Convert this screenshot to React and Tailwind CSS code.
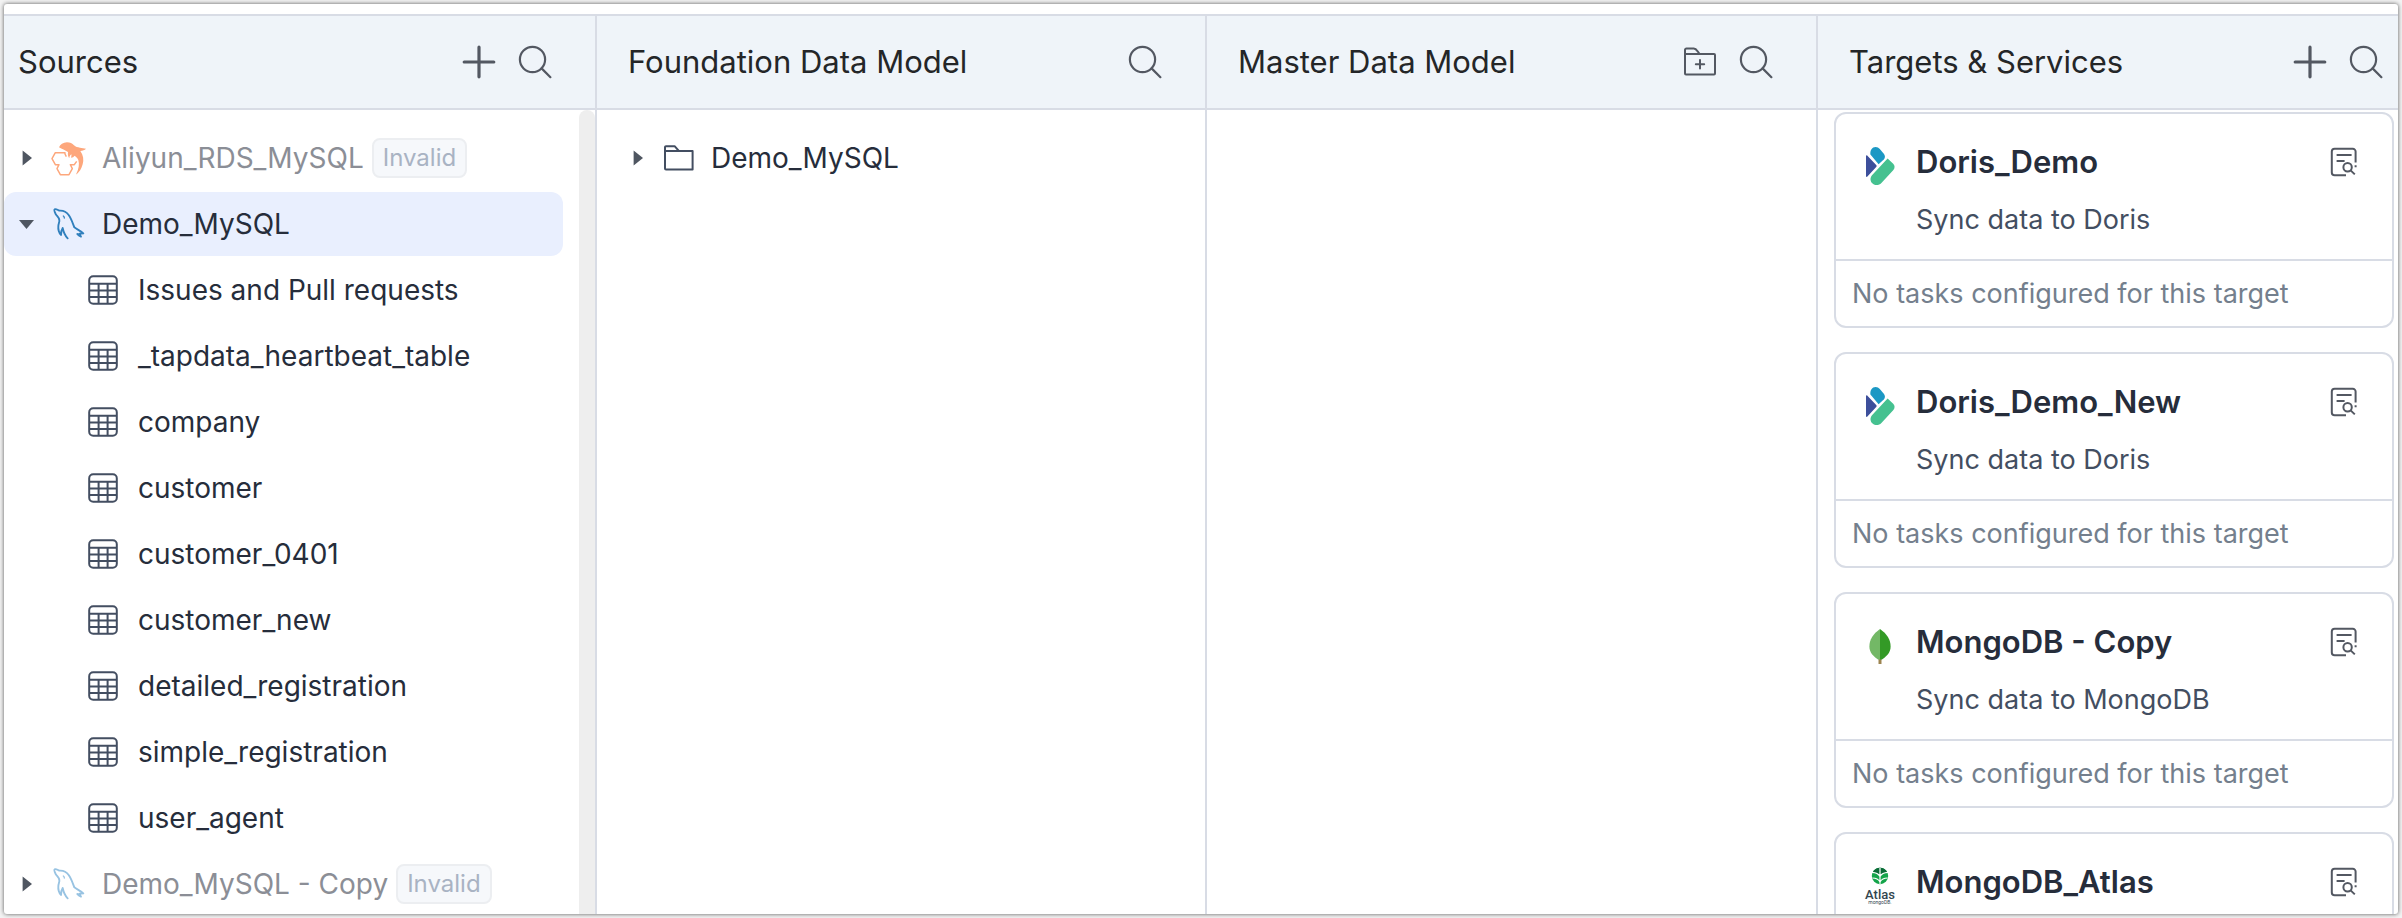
import React from "react";

function SearchIcon() {
  return (
    <svg viewBox="0 0 36 36" className="size-9" fill="none" stroke="currentColor" strokeWidth="2.2" strokeLinecap="round">
      <circle cx="15.5" cy="15.5" r="12.6" />
      <path d="M24.6 24.4 33.4 33.2" />
    </svg>
  );
}

function PlusIcon() {
  return (
    <svg viewBox="0 0 36 36" className="size-9" fill="none" stroke="currentColor" strokeWidth="3.2" strokeLinecap="round">
      <path d="M18 3.2v29.6M3.2 18h29.6" />
    </svg>
  );
}

function FolderPlusIcon() {
  return (
    <svg viewBox="0 0 36 36" className="size-9" fill="none" stroke="currentColor" strokeWidth="2" strokeLinejoin="round" strokeLinecap="round">
      <path d="M3 10V6a1.4 1.4 0 0 1 1.4-1.4h7.4c2.6 0 3.2 2.2 5.6 5.1M3 10h29a1 1 0 0 1 1 1v18.6a1 1 0 0 1-1 1H4a1 1 0 0 1-1-1z" />
      <path d="M18 16v8.4M13.8 20.2h8.4" />
    </svg>
  );
}

function FolderIcon() {
  return (
    <svg viewBox="0 0 32 32" className="size-8" fill="none" stroke="currentColor" strokeWidth="2" strokeLinejoin="round">
      <path d="M2 9V5.2a1 1 0 0 1 1-1h8.6l4 4.4M2 9h27.6v18.6H3a1 1 0 0 1-1-1z" />
    </svg>
  );
}

function TableIcon() {
  return (
    <svg viewBox="0 0 30 30" className="size-[30px]" fill="none" stroke="currentColor" strokeWidth="2">
      <rect x="1.2" y="1.2" width="27.6" height="27.6" rx="4" />
      <path d="M1.2 8.8h27.6M1.2 15.6h27.6M1.2 22h27.6M10.6 8.8v20M19.6 8.8v20" />
    </svg>
  );
}

function DetailIcon() {
  return (
    <svg viewBox="0 0 32 32" className="size-8" fill="none" stroke="currentColor" strokeWidth="2">
      <path d="M19 29.2H7.6a2.8 2.8 0 0 1-2.8-2.8V5.6a2.8 2.8 0 0 1 2.8-2.8h18.2a2.8 2.8 0 0 1 2.8 2.8v11" />
      <path d="M9.6 9h15M9.6 15h8" />
      <circle cx="20.6" cy="21.2" r="4.2" />
      <path d="M23.6 24.4l4.2 4M27.6 20.2h2" />
    </svg>
  );
}

function Caret({ open }) {
  return (
    <svg viewBox="0 0 20 20" className="size-5" fill="#4f5661">
      {open ? <path d="M3 6h15l-7.5 9z" /> : <path d="M6.6 2.6v14.8L16 10z" />}
    </svg>
  );
}

function AliyunIcon() {
  return (
    <svg viewBox="12 12 108 108" className="size-9" fill="none">
      <path
        d="M36 34c4-8 12-15 24-15 9 0 16 4 21 9 5 6 11 5 18 7 6 1 12 1 18 3-4 4-10 6-17 7 9 12 11 27 7 40-4 14-10 23-18 30-1 0-2-1-1-2 7-14 10-28 6-41-2-6-6-9-11-13-3 4-6 5-11 6 1-4 2-7 1-10-4 3-6 7-6 12-4-5-5-11-4-19-9-6-18-8-27-14z"
        fill="#fda77c"
      />
      <path
        d="M58 62l-4-8v-4H25L15 68l10 18h11l-6 12 10 18h26l10-18-6-12h12l7-10"
        stroke="#fda77c"
        strokeWidth="4.4"
        strokeLinejoin="round"
      />
    </svg>
  );
}

function MysqlIcon({ faded }) {
  return (
    <svg
      viewBox="12 12 108 108"
      className="size-9"
      fill="none"
      stroke={faded ? "#98c3e2" : "#3180bd"}
      strokeWidth="5.6"
      strokeLinejoin="round"
      strokeLinecap="round"
    >
      <path d="M62 109c-7-7-12-17-15-31-4 6-5 13-5 21-6-7-9-17-8-27 0-7 4-11 3-18-1-8-7-11-11-18-3-6-6-12-3-14 4-2 9 2 14 4 12-1 21 3 28 13 8 11 12 24 17 37 8 6 18 10 27 18-5 1-8 1-12 1l5 9c-5-2-8-5-11-8" />
      <path d="M49 42c2 1 3 3 3 6" strokeWidth="4" />
    </svg>
  );
}

function DorisIcon() {
  return (
    <svg viewBox="0 0 40 40" className="size-10">
      <path d="M6 10.2c0-.9.8-1.2 1.4-.5l8.800 9.200c.6.7.6 1.300 0 2L7.400 30.600c-.6.6-1.400.4-1.400-.5z" fill="#3d4f9b" />
      <path d="M10.400 8.600C9.800 4.200 12.200 1 15.600 1c1.800 0 3 .7 4.200 2l4 4.800c1.500 1.800 1.500 4 0 5.800l-5.200 4.600z" fill="#1b98c4" />
      <path d="M27.600 12.400l5.600 5.400c1.800 1.800 1.800 4.200.2 6.200L21.400 37c-2.400 2.600-6.200 2.800-8.800.6-2.600-2.200-2.800-6-.4-8.600z" fill="#45c190" />
    </svg>
  );
}

function MongoIcon() {
  return (
    <svg viewBox="0 0 40 40" className="size-10">
      <path d="M20 3C13 8 9.4 13.5 9.4 20.5c0 6 4 10.5 10.6 14z" fill="#73b866" />
      <path d="M20 3c7 5 10.6 10.5 10.6 17.5 0 6-4 10.5-10.6 14z" fill="#339a26" />
      <path d="M18.5 33.5h3V38h-3z" fill="#9c8450" />
    </svg>
  );
}

function AtlasIcon() {
  return (
    <svg viewBox="0 0 40 40" className="size-10">
      <circle cx="20" cy="10" r="8.2" fill="#14a44a" />
      <path d="M20 1.8a8.2 8.2 0 0 1 7 4L20 9.6 13 5.8a8.2 8.2 0 0 1 7-4z" fill="#0b6b37" />
      <path d="M20 2v16M12 6.4c3.400.2 6.400 1.200 8 4M28 6.400c-3.400.2-6.400 1.200-8 4M12.400 12c3 0 6 1 7.600 4M27.600 12c-3 0-6 1-7.600 4" stroke="#fff" strokeWidth="1.2" fill="none" />
      <text x="20" y="33" textAnchor="middle" fontSize="13" fontWeight="500" fill="#33464f" fontFamily="Roboto, sans-serif">Atlas</text>
      <text x="20" y="38" textAnchor="middle" fontSize="5" fill="#33464f" fontFamily="Roboto, sans-serif">mongoDB.</text>
    </svg>
  );
}

const tables = [
  "Issues and Pull requests",
  "_tapdata_heartbeat_table",
  "company",
  "customer",
  "customer_0401",
  "customer_new",
  "detailed_registration",
  "simple_registration",
  "user_agent",
];

const targets = [
  { name: "Doris_Demo", note: "Sync data to Doris", Icon: DorisIcon },
  { name: "Doris_Demo_New", note: "Sync data to Doris", Icon: DorisIcon },
  { name: "MongoDB - Copy", note: "Sync data to MongoDB", Icon: MongoIcon },
  { name: "MongoDB_Atlas", Icon: AtlasIcon },
];

function IconButton({ label, children }) {
  return (
    <button type="button" aria-label={label} className="flex size-9 shrink-0 items-center justify-center text-[#535862]">
      {children}
    </button>
  );
}

function ColumnHeader({ title, className, children }) {
  return (
    <header className={`flex h-24 shrink-0 items-center border-y-2 border-[#d8dce5] bg-[#eff4f9] ${className}`}>
      <h2 className="flex-1 truncate text-[31px] leading-10 text-[#242628]">{title}</h2>
      <div className="flex items-center gap-5">{children}</div>
    </header>
  );
}

function Badge() {
  return (
    <span className="ml-2 flex h-10 items-center rounded-lg border-2 border-[#eceef1] bg-[#f6f8fb] px-[9px] text-[24px] text-[#a9b3c3]">
      Invalid
    </span>
  );
}

function SourceRow({ name, icon, open, invalid }) {
  return (
    <button
      type="button"
      aria-expanded={!!open}
      className={`flex h-16 w-full shrink-0 items-center rounded-xl pl-3 text-left text-[28px] leading-9 ${open ? "bg-[#e9effe]" : ""} ${invalid ? "text-[#8b8e96]" : "text-[#262d3b]"}`}
    >
      <Caret open={open} />
      <span className="mx-[15px] flex shrink-0">{icon}</span>
      {name}
      {invalid && <Badge />}
    </button>
  );
}

function TargetCard({ name, note, Icon }) {
  return (
    <article className="shrink-0 rounded-xl border-2 border-[#d8dce5] bg-white">
      <div className="flex h-[147px] gap-4 border-b-2 border-[#d8dce5] pt-7 pl-6 pr-[33px]">
        <div className="shrink-0 pt-1">
          <Icon />
        </div>
        <div className="min-w-0 flex-1">
          <h3 className="truncate text-[31px] font-semibold leading-10 text-[#262d3b]">{name}</h3>
          {note && <p className="pt-5 text-[27px] leading-9 text-[#434e61]">{note}</p>}
        </div>
        <button type="button" aria-label={`Details of ${name}`} className="mt-1 flex size-8 items-center text-[#535862]">
          <DetailIcon />
        </button>
      </div>
      {note && (
        <p className="px-4 py-[15px] text-[27px] leading-[35px] text-[#747f8d]">No tasks configured for this target</p>
      )}
    </article>
  );
}

export default function App() {
  return (
    <div className="h-screen overflow-hidden bg-[#f3f3f3] p-1 font-['Inter',sans-serif]">
      <main className="grid h-full grid-cols-[593fr_610fr_611fr_580fr] overflow-hidden rounded-[3px] bg-white pt-[10px] shadow-[0_0_4px_rgba(0,0,0,0.65)]">
        <section className="flex min-h-0 min-w-0 flex-col border-r-2 border-[#d8dce5]">
          <ColumnHeader title="Sources" className="pl-[14px] pr-[42px]">
            <IconButton label="Add source"><PlusIcon /></IconButton>
            <IconButton label="Search sources"><SearchIcon /></IconButton>
          </ColumnHeader>
          <div className="flex min-h-0 flex-1">
            <nav className="flex min-w-0 flex-1 flex-col gap-[2px] overflow-hidden pt-4 pr-4">
              <SourceRow name="Aliyun_RDS_MySQL" icon={<AliyunIcon />} invalid />
              <SourceRow name="Demo_MySQL" icon={<MysqlIcon />} open />
              {tables.map((t) => (
                <button key={t} type="button" className="flex h-16 w-full shrink-0 items-center gap-5 pl-[84px] text-left text-[28px] leading-9 text-[#262d3b]">
                  <span className="text-[#434e61]"><TableIcon /></span>
                  {t}
                </button>
              ))}
              <SourceRow name="Demo_MySQL - Copy" icon={<MysqlIcon faded />} invalid />
            </nav>
            <div className="w-4 shrink-0 rounded-t-lg bg-[#eeeeee]" />
          </div>
        </section>

        <section className="flex min-h-0 min-w-0 flex-col border-r-2 border-[#d8dce5]">
          <ColumnHeader title="Foundation Data Model" className="pl-[31px] pr-[42px]">
            <IconButton label="Search foundation models"><SearchIcon /></IconButton>
          </ColumnHeader>
          <nav className="pt-4 pr-4">
            <button type="button" className="flex h-16 w-full items-center pl-[30px] text-left text-[28px] leading-9 text-[#262d3b]">
              <Caret />
              <span className="mx-4 text-[#434e61]"><FolderIcon /></span>
              Demo_MySQL
            </button>
          </nav>
        </section>

        <section className="flex min-h-0 min-w-0 flex-col border-r-2 border-[#d8dce5]">
          <ColumnHeader title="Master Data Model" className="pl-[31px] pr-[42px]">
            <IconButton label="Add folder"><FolderPlusIcon /></IconButton>
            <IconButton label="Search master models"><SearchIcon /></IconButton>
          </ColumnHeader>
        </section>

        <section className="flex min-h-0 min-w-0 flex-col">
          <ColumnHeader title="Targets & Services" className="pl-[31px] pr-[14px]">
            <IconButton label="Add target"><PlusIcon /></IconButton>
            <IconButton label="Search targets"><SearchIcon /></IconButton>
          </ColumnHeader>
          <div className="flex min-h-0 flex-1 flex-col gap-6 overflow-hidden pt-[2px] pl-4 pr-1">
            {targets.map((t) => (
              <TargetCard key={t.name} {...t} />
            ))}
          </div>
        </section>
      </main>
    </div>
  );
}
